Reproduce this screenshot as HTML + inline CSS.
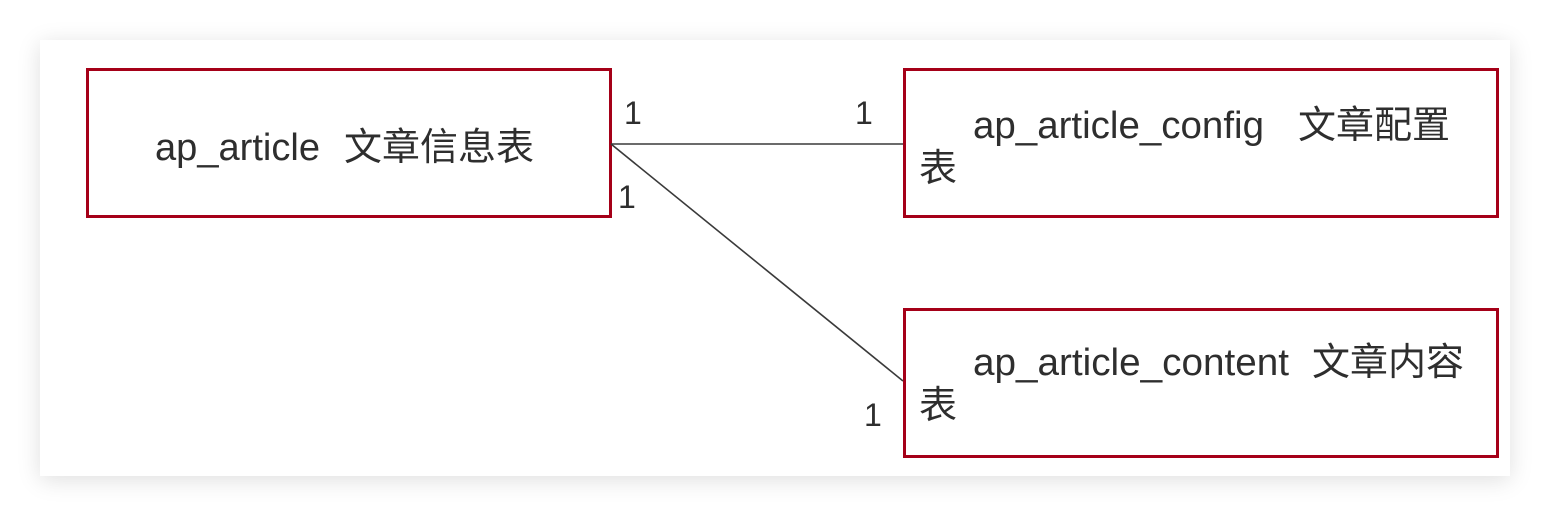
<!DOCTYPE html>
<html><head><meta charset="utf-8">
<style>
html,body{margin:0;padding:0;background:#fff;width:1550px;height:516px;overflow:hidden}
.card{position:absolute;left:40px;top:40px;width:1470px;height:436px;background:#fff;box-shadow:0 4px 22px rgba(0,0,0,0.13)}
svg{position:absolute;left:0;top:0}
text{font-family:"Liberation Sans","Noto Sans CJK SC",sans-serif;fill:#2e2e2e}
</style></head><body>
<div class="card"></div>
<svg width="1550" height="516" viewBox="0 0 1550 516">
<g fill="none" stroke="#a50018" stroke-width="3">
<rect x="87.5" y="69.5" width="523" height="147"/>
<rect x="904.5" y="69.5" width="593" height="147"/>
<rect x="904.5" y="309.5" width="593" height="147"/>
</g>
<g stroke="#3a3a3a" stroke-width="1.6">
<line x1="611" y1="144" x2="903" y2="144"/>
<line x1="611" y1="144" x2="903" y2="381"/>
</g>
<g font-size="38">
<text x="155" y="160" textLength="165" lengthAdjust="spacingAndGlyphs">ap_article</text>
<text x="344" y="160" font-size="38">文章信息表</text>
<text x="973" y="138" textLength="291" lengthAdjust="spacingAndGlyphs">ap_article_config</text>
<text x="1298" y="138">文章配置</text>
<text x="919" y="181">表</text>
<text x="973" y="375" textLength="316" lengthAdjust="spacingAndGlyphs">ap_article_content</text>
<text x="1312" y="375">文章内容</text>
<text x="919" y="418">表</text>
</g>
<g font-size="32">
<text x="624" y="124">1</text>
<text x="855" y="124">1</text>
<text x="618" y="208">1</text>
<text x="864" y="426">1</text>
</g>
</svg>
</body></html>
